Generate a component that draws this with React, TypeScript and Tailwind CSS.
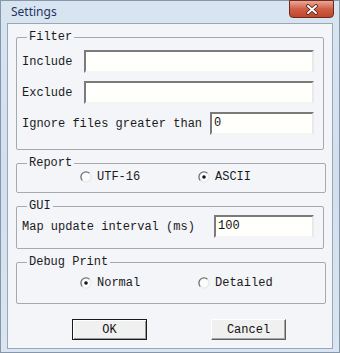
import type { ReactNode } from 'react';

const mono = { fontFamily: '"Liberation Mono", "DejaVu Sans Mono", monospace' };

function Group({ title, children, className = '' }: { title: string; children: ReactNode; className?: string }) {
  return (
    <fieldset className={`border border-[#a6a9ad] rounded-[2px] pl-[5px] pr-[9px] ${className}`}>
      <legend className="ml-[5px] px-[2px] text-[12px] leading-[14px] text-[#1b1b1b]">{title}</legend>
      {children}
    </fieldset>
  );
}

function TextBox({ value = '', className = '' }: { value?: string; className?: string }) {
  return (
    <div
      className={`h-[23px] bg-[#fffffb] border-2 border-t-[#7b7b7b] border-l-[#7b7b7b] border-b-[#f4f4f4] border-r-[#e9e9e9] pl-[2px] text-[12px] leading-[19px] text-[#111] ${className}`}
    >
      {value}
    </div>
  );
}

function Radio({ label, checked }: { label: string; checked?: boolean }) {
  return (
    <div className="w-[118px] flex items-center gap-[5px] text-[12px] leading-[14px] text-[#1b1b1b]">
      <svg width="12" height="12" viewBox="0 0 12 12">
        <circle cx="6" cy="6" r="5.5" fill="#fbfbfb" />
        <path d="M9.6 2.4 A5 5 0 0 0 2.4 9.6" fill="none" stroke="#6e6e6e" strokeWidth="1.3" />
        <path d="M9.6 2.4 A5 5 0 0 1 2.4 9.6" fill="none" stroke="#e8e8e8" strokeWidth="1.3" />
        {checked && <circle cx="6" cy="6" r="1.8" fill="#151515" />}
      </svg>
      <span>{label}</span>
    </div>
  );
}

export default function App() {
  return (
    <div
      className="w-[340px] h-[353px] border border-[#8797ab] bg-gradient-to-b from-[#d9e4f1] via-[#d3dfed] to-[#dbe5f1] flex flex-col"
      style={mono}
    >
      <div className="h-[22px] flex items-start justify-between pl-[10px] pr-[5px]">
        <span
          className="pt-[4px] text-[12px] leading-[14px] text-[#1e3563]"
          style={{ fontFamily: '"Noto Sans", "Open Sans", sans-serif' }}
        >
          Settings
        </span>
        <div className="-mt-px w-[45px] h-[18px] rounded-b-[4px] border border-[#6a2a1f] bg-gradient-to-b from-[#eaa898] via-[#cf5e46] to-[#c2452d] flex items-center justify-center">
          <svg width="14" height="11" viewBox="0 0 14 11">
            <path d="M3 2 L11 9 M11 2 L3 9" stroke="#4a2018" strokeWidth="3.6" strokeLinecap="round" />
            <path d="M3 2 L11 9 M11 2 L3 9" stroke="#ffffff" strokeWidth="2" strokeLinecap="round" />
          </svg>
        </div>
      </div>

      <div className="flex-1 mx-[6px] mb-[3px] border border-[#98a8bb] bg-[#f3f5f8] pl-[8px] pr-[8px] pt-[6px] flex flex-col">
        <Group title="Filter" className="pb-[14px]">
          <div className="mt-[6px] flex items-center">
            <span className="w-[62px] text-[12px] text-[#1b1b1b]">Include</span>
            <TextBox className="flex-1" />
          </div>
          <div className="mt-[8px] flex items-center">
            <span className="w-[62px] text-[12px] text-[#1b1b1b]">Exclude</span>
            <TextBox className="flex-1" />
          </div>
          <div className="mt-[8px] flex items-center">
            <span className="w-[188px] text-[12px] text-[#1b1b1b]">Ignore files greater than</span>
            <TextBox className="flex-1" value="0" />
          </div>
        </Group>

        <Group title="Report" className="mt-[6px] pb-[8px]">
          <div className="pl-[58px] flex">
            <Radio label="UTF-16" />
            <Radio label="ASCII" checked />
          </div>
        </Group>

        <Group title="GUI" className="mt-[6px] pb-[10px]">
          <div className="mt-[2px] flex items-center">
            <span className="w-[192px] text-[12px] text-[#1b1b1b]">Map update interval (ms)</span>
            <TextBox className="flex-1" value="100" />
          </div>
        </Group>

        <Group title="Debug Print" className="mt-[6px] pb-[13px]">
          <div className="mt-[7px] pl-[58px] flex">
            <Radio label="Normal" checked />
            <Radio label="Detailed" />
          </div>
        </Group>

        <div className="mt-[15px] pl-[56px] flex gap-[64px]">
          <div className="w-[75px] h-[21px] border border-[#1a1a1a] bg-[#f0f0f0] shadow-[inset_1px_1px_0_#ffffff,inset_-1px_-1px_0_#9a9a9a] flex items-center justify-center text-[12px] text-[#111]">
            OK
          </div>
          <div className="w-[75px] h-[21px] border border-t-[#ffffff] border-l-[#ffffff] border-b-[#5f5f5f] border-r-[#5f5f5f] bg-[#f0f0f0] shadow-[inset_-1px_-1px_0_#a5a5a5] flex items-center justify-center text-[12px] text-[#111]">
            Cancel
          </div>
        </div>
      </div>
    </div>
  );
}
